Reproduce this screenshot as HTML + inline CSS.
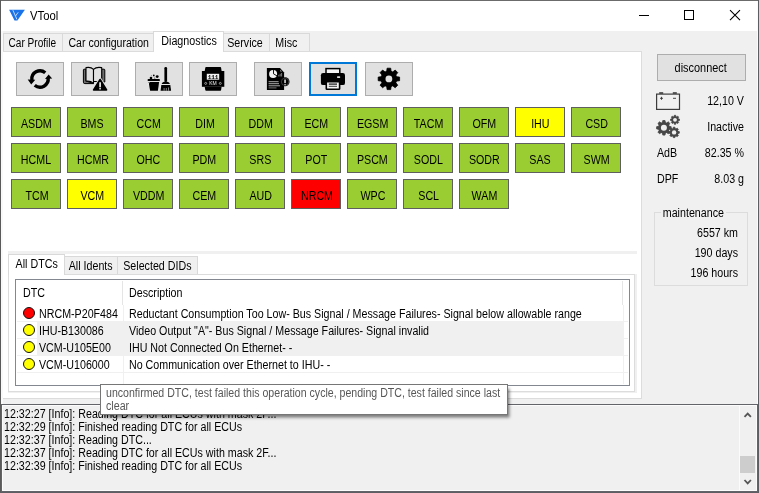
<!DOCTYPE html><html><head><meta charset="utf-8"><title>VTool</title><style>
*{box-sizing:border-box;margin:0;padding:0}
html,body{width:759px;height:493px;overflow:hidden;background:#f0f0f0}
body{position:relative;font-family:"Liberation Sans",sans-serif;font-size:12px;color:#000;line-height:13px}
.x{display:inline-block;transform:scaleX(.89);transform-origin:50% 50%;white-space:nowrap}
.a{position:absolute}
.t{position:absolute;white-space:nowrap;height:13px;line-height:13px;transform:scaleX(.89);transform-origin:0 50%}
.r{text-align:right;transform-origin:100% 50%}
.tb{position:absolute;top:62px;width:48px;height:34px;background:#e1e1e1;border:1px solid #adadad}
.ecu{position:absolute;width:50px;height:30px;background:#9acd32;border:1px solid #5f5f5f;text-align:center;line-height:30px;padding-top:1px;padding-left:1px}
.tab{position:absolute;background:#f0f0f0;border:1px solid #d9d9d9;border-bottom:none;text-align:center}
.tab.sel{background:#fff}
</style></head><body>
<div class="a" style="left:0;top:0;width:759px;height:31px;background:#fff"></div>
<div class="t" style="left:30px;top:9px;font-size:12px;line-height:14px;height:14px;transform:scaleX(.94)">VTool</div>
<div class="a" style="left:0px;top:51px;width:642px;height:348px;background:#fff;border:1px solid #dcdcdc"></div>
<div class="tab" style="left:3px;top:33px;width:61px;height:18px;line-height:13px;padding-top:3px"><span class="x" style="transform:scaleX(0.84);position:relative;left:-1px">Car Profile</span></div>
<div class="tab" style="left:62px;top:33px;width:93px;height:18px;line-height:13px;padding-top:3px"><span class="x" style="transform:scaleX(0.88);position:relative;left:-0.5px">Car configuration</span></div>
<div class="tab sel" style="left:153px;top:31px;width:71px;height:21px;line-height:13px;padding-top:3px"><span class="x" style="transform:scaleX(0.895);position:relative;left:1px">Diagnostics</span></div>
<div class="tab" style="left:223px;top:33px;width:48px;height:18px;line-height:13px;padding-top:3px"><span class="x" style="transform:scaleX(0.89);position:relative;left:-1.5px">Service</span></div>
<div class="tab" style="left:269px;top:33px;width:41px;height:18px;line-height:13px;padding-top:3px"><span class="x" style="transform:scaleX(0.89);position:relative;left:-3.5px">Misc</span></div>
<div class="tb" style="left:16px"></div>
<div class="tb" style="left:71px"></div>
<div class="tb" style="left:135px"></div>
<div class="tb" style="left:189px"></div>
<div class="tb" style="left:254px"></div>
<div class="tb" style="left:309px;border:2px solid #0078d7"></div>
<div class="tb" style="left:365px"></div>
<div class="ecu" style="left:11px;top:107px;"><span class="x">ASDM</span></div>
<div class="ecu" style="left:67px;top:107px;"><span class="x">BMS</span></div>
<div class="ecu" style="left:123px;top:107px;"><span class="x">CCM</span></div>
<div class="ecu" style="left:179px;top:107px;"><span class="x">DIM</span></div>
<div class="ecu" style="left:235px;top:107px;"><span class="x">DDM</span></div>
<div class="ecu" style="left:291px;top:107px;"><span class="x">ECM</span></div>
<div class="ecu" style="left:347px;top:107px;"><span class="x">EGSM</span></div>
<div class="ecu" style="left:403px;top:107px;"><span class="x">TACM</span></div>
<div class="ecu" style="left:459px;top:107px;"><span class="x">OFM</span></div>
<div class="ecu" style="left:515px;top:107px;background:#ffff00;"><span class="x">IHU</span></div>
<div class="ecu" style="left:571px;top:107px;"><span class="x">CSD</span></div>
<div class="ecu" style="left:11px;top:143px;"><span class="x">HCML</span></div>
<div class="ecu" style="left:67px;top:143px;"><span class="x">HCMR</span></div>
<div class="ecu" style="left:123px;top:143px;"><span class="x">OHC</span></div>
<div class="ecu" style="left:179px;top:143px;"><span class="x">PDM</span></div>
<div class="ecu" style="left:235px;top:143px;"><span class="x">SRS</span></div>
<div class="ecu" style="left:291px;top:143px;"><span class="x">POT</span></div>
<div class="ecu" style="left:347px;top:143px;"><span class="x">PSCM</span></div>
<div class="ecu" style="left:403px;top:143px;"><span class="x">SODL</span></div>
<div class="ecu" style="left:459px;top:143px;"><span class="x">SODR</span></div>
<div class="ecu" style="left:515px;top:143px;"><span class="x">SAS</span></div>
<div class="ecu" style="left:571px;top:143px;"><span class="x">SWM</span></div>
<div class="ecu" style="left:11px;top:179px;"><span class="x">TCM</span></div>
<div class="ecu" style="left:67px;top:179px;background:#ffff00;"><span class="x">VCM</span></div>
<div class="ecu" style="left:123px;top:179px;"><span class="x">VDDM</span></div>
<div class="ecu" style="left:179px;top:179px;"><span class="x">CEM</span></div>
<div class="ecu" style="left:235px;top:179px;"><span class="x">AUD</span></div>
<div class="ecu" style="left:291px;top:179px;background:#ff0000;"><span class="x">NRCM</span></div>
<div class="ecu" style="left:347px;top:179px;"><span class="x">WPC</span></div>
<div class="ecu" style="left:403px;top:179px;"><span class="x">SCL</span></div>
<div class="ecu" style="left:459px;top:179px;"><span class="x">WAM</span></div>
<div class="a" style="left:8px;top:251px;width:629px;height:3px;background:#f0f0f0"></div>
<div class="a" style="left:8px;top:274px;width:629px;height:119px;background:#f0f0f0"></div>
<div class="a" style="left:8px;top:274px;width:627px;height:118px;background:#fff;border:1px solid #dcdcdc"></div>
<div class="tab sel" style="left:8px;top:254px;width:57px;height:21px;line-height:13px;padding-top:3px"><span class="x">All DTCs</span></div>
<div class="tab" style="left:64px;top:256px;width:54px;height:18px;line-height:13px;padding-top:3px"><span class="x">All Idents</span></div>
<div class="tab" style="left:117px;top:256px;width:81px;height:18px;line-height:13px;padding-top:3px"><span class="x">Selected DIDs</span></div>
<div class="a" style="left:15px;top:279px;width:615px;height:107px;background:#fff;border:1px solid #828790"></div>
<div class="a" style="left:122px;top:281px;width:1px;height:24px;background:#e5e5e5"></div>
<div class="a" style="left:622px;top:281px;width:1px;height:24px;background:#e5e5e5"></div>
<div class="t" style="left:23px;top:287px">DTC</div>
<div class="t" style="left:129px;top:287px">Description</div>
<div class="a" style="left:17px;top:321px;width:611px;height:1px;background:#f0f0f0"></div>
<div class="a" style="left:17px;top:338px;width:611px;height:1px;background:#f0f0f0"></div>
<div class="a" style="left:17px;top:355px;width:611px;height:1px;background:#f0f0f0"></div>
<div class="a" style="left:17px;top:372px;width:611px;height:1px;background:#f0f0f0"></div>
<div class="a" style="left:123px;top:305px;width:1px;height:79px;background:#f0f0f0"></div>
<div class="a" style="left:623px;top:305px;width:1px;height:79px;background:#f0f0f0"></div>
<div class="a" style="left:37px;top:322px;width:586px;height:33px;background:#f0f0f0"></div>
<div class="a" style="left:23px;top:307px;width:12px;height:12px;border-radius:50%;background:#ff0000;border:1px solid #111"></div>
<div class="t" style="left:39px;top:308px">NRCM-P20F484</div>
<div class="t" style="left:129px;top:308px">Reductant Consumption Too Low- Bus Signal / Message Failures- Signal below allowable range</div>
<div class="a" style="left:23px;top:324px;width:12px;height:12px;border-radius:50%;background:#ffff00;border:1px solid #111"></div>
<div class="t" style="left:39px;top:325px">IHU-B130086</div>
<div class="t" style="left:129px;top:325px">Video Output &quot;A&quot;- Bus Signal / Message Failures- Signal invalid</div>
<div class="a" style="left:23px;top:341px;width:12px;height:12px;border-radius:50%;background:#ffff00;border:1px solid #111"></div>
<div class="t" style="left:39px;top:342px">VCM-U105E00</div>
<div class="t" style="left:129px;top:342px">IHU Not Connected On Ethernet- -</div>
<div class="a" style="left:23px;top:358px;width:12px;height:12px;border-radius:50%;background:#ffff00;border:1px solid #111"></div>
<div class="t" style="left:39px;top:359px">VCM-U106000</div>
<div class="t" style="left:129px;top:359px">No Communication over Ethernet to IHU- -</div>
<div class="a" style="left:657px;top:54px;width:89px;height:27px;background:#e1e1e1;border:1px solid #adadad;text-align:center;line-height:25px;padding-right:2px;padding-top:1px"><span class="x" style="transform:scaleX(.91)">disconnect</span></div>
<div class="t r" style="left:680px;width:64px;top:95px">12,10 V</div>
<div class="t r" style="left:680px;width:64px;top:121px">Inactive</div>
<div class="t" style="left:657px;top:147px">AdB</div>
<div class="t r" style="left:680px;width:64px;top:147px">82.35 %</div>
<div class="t" style="left:657px;top:173px">DPF</div>
<div class="t r" style="left:680px;width:64px;top:173px">8.03 g</div>
<div class="a" style="left:654px;top:212px;width:94px;height:74px;border:1px solid #dcdcdc"></div>
<div class="t" style="left:661px;top:207px;background:#f0f0f0;padding:0 2px">maintenance</div>
<div class="t r" style="left:670px;width:68px;top:227px">6557 km</div>
<div class="t r" style="left:670px;width:68px;top:247px">190 days</div>
<div class="t r" style="left:670px;width:68px;top:267px">196 hours</div>
<div class="a" style="left:1px;top:31px;width:2px;height:373px;background:#f9f9f9"></div>
<div class="a" style="left:757px;top:1px;width:1px;height:403px;background:#fbfbfb"></div>
<div class="a" style="left:1px;top:404px;width:757px;height:88px;background:#f0f0f0;border:1px solid #62646a;box-shadow:inset 0 0 0 1px #fcfcfc"></div>
<div class="t" style="left:4px;top:408px">12:32:27 [Info]: Reading DTC for all ECUs with mask 2F...</div>
<div class="t" style="left:4px;top:421px">12:32:29 [Info]: Finished reading DTC for all ECUs</div>
<div class="t" style="left:4px;top:434px">12:32:37 [Info]: Reading DTC...</div>
<div class="t" style="left:4px;top:447px">12:32:37 [Info]: Reading DTC for all ECUs with mask 2F...</div>
<div class="t" style="left:4px;top:460px">12:32:39 [Info]: Finished reading DTC for all ECUs</div>
<div class="a" style="left:739px;top:405px;width:1px;height:85px;background:#fbfbfb"></div>
<div class="a" style="left:740px;top:456px;width:15px;height:17px;background:#cdcdcd"></div>
<div class="a" style="left:100px;top:384px;width:408px;height:31px;background:#fff;border:1px solid #767676;box-shadow:2px 3px 3px -0.5px rgba(0,0,0,0.5);color:#575757;padding:2px 0 0 5px;line-height:12.5px;white-space:nowrap"><span class="x" style="transform-origin:0 50%;transform:scaleX(.882)">unconfirmed DTC, test failed this operation cycle, pending DTC, test failed since last</span><br><span class="x" style="transform-origin:0 50%">clear</span></div>
<svg class="a" style="left:0;top:0" width="759" height="493" viewBox="0 0 759 493">
<path d="M9.1,9.8 L24.9,9.8 L17.4,20.6 L14.5,20.6 Z" fill="#1a73e8"/>
<path d="M12.9,10.2 L16.9,19.4 M18.2,12.3 L15.6,15.9" stroke="#fff" stroke-width="0.7" fill="none"/>
<path d="M639,15.5 H649" stroke="#000" stroke-width="1"/>
<rect x="684.5" y="10.5" width="9" height="9" fill="none" stroke="#000" stroke-width="1"/>
<path d="M730,10.2 L740,20.2 M740,10.2 L730,20.2" stroke="#000" stroke-width="1.1"/>
<path d="M31.88,80.14 A8.20,8.20 0 0 1 45.27,72.72" stroke="#000" stroke-width="3.4" fill="none"/>
<path d="M48.12,77.86 A8.20,8.20 0 0 1 34.73,85.28" stroke="#000" stroke-width="3.4" fill="none"/>
<path d="M27.7,79.5 L35.3,79.8 L31.2,84.4Z M45,79 L52.2,78.5 L48.6,74.4Z" fill="#000"/>
<path d="M84,69.2 H86 V81 L93.5,83.6 H84.8 Q83.4,83.6 83.4,82.2 V69.9 Q83.4,69.2 84,69.2Z" fill="#6e6e6e" stroke="#000" stroke-width="1"/>
<path d="M101.6,69.2 H104 Q104.8,69.2 104.8,70 V82 H101.6Z" fill="#6e6e6e" stroke="#000" stroke-width="1"/>
<path d="M86,67.6 Q90.8,66.6 93.5,69.3 V83.3 Q90.5,80.6 86,81.2Z" fill="#e1e1e1" stroke="#000" stroke-width="1.1" stroke-linejoin="round"/>
<path d="M93.5,69.3 Q96.3,66.6 101.7,67.6 V81.5 H93.5Z" fill="#e1e1e1" stroke="#000" stroke-width="1.1" stroke-linejoin="round"/>
<path d="M100.1,79.5 L106.6,89.9 H93.6Z" fill="#e1e1e1" stroke="#e1e1e1" stroke-width="3.4" stroke-linejoin="round"/>
<path d="M100.1,79.5 L106.6,89.9 H93.6Z" fill="#000" stroke="#000" stroke-width="1.6" stroke-linejoin="round"/>
<path d="M100.1,82.2 V87.2" stroke="#e0e0e0" stroke-width="1.8"/><circle cx="100.1" cy="88.7" r="0.9" fill="#e0e0e0"/>
<rect x="147.6" y="78.9" width="12.3" height="2.2" rx="0.9" fill="#000"/>
<path d="M148.6,82 H159.1 L157.9,90.7 H150.1Z" fill="#000"/>
<path d="M149.6,82.6 Q147.2,83.5 148.2,85.6" stroke="#f4f4f4" stroke-width="0.8" fill="none"/>
<circle cx="157.2" cy="76.6" r="1.45" fill="#000"/><circle cx="151" cy="78" r="1.3" fill="#000"/><circle cx="153.8" cy="75.4" r="0.85" fill="#000"/><circle cx="154.8" cy="77.9" r="0.5" fill="#000"/><circle cx="151.2" cy="75.6" r="0.35" fill="#000"/>
<rect x="164.4" y="67" width="2.7" height="15" rx="1.2" fill="#000"/>
<path d="M161.7,84.1 Q162.2,81.6 165.7,81.4 Q169.4,81.6 169.9,84.1Z" fill="#000"/>
<path d="M161.3,85 H170.3 L171.1,90.7 H160.6Z" fill="#000"/>
<path d="M164.1,88 V90.7 M166.3,88 V90.7 M168.5,87.5 V90.7" stroke="#d8d8d8" stroke-width="0.6"/>
<path d="M206,67 H220.4 Q221,67 221.1,67.8 L221.6,71 H204.7 L205.3,67.8 Q205.4,67 206,67Z" fill="#000"/>
<path d="M206,90.8 H220.4 Q221,90.8 221.1,90 L221.6,86.8 H204.7 L205.3,90 Q205.4,90.8 206,90.8Z" fill="#000"/>
<rect x="201.9" y="71" width="22.4" height="15.8" fill="#000"/>
<rect x="206.8" y="73.8" width="12.4" height="5.9" fill="#f2f2f2"/>
<g style="filter:grayscale(1)"><text x="213" y="79" font-family="Liberation Mono,monospace" font-weight="bold" font-size="6.2" text-anchor="middle" fill="#000" letter-spacing="-0.2">111</text>
<text x="213" y="85.2" font-family="Liberation Sans,sans-serif" font-size="5" text-anchor="middle" fill="#f2f2f2">KM</text></g>
<circle cx="205.7" cy="83.4" r="1" fill="none" stroke="#e8e8e8" stroke-width="0.6"/><circle cx="220.3" cy="83.4" r="1" fill="none" stroke="#e8e8e8" stroke-width="0.6"/>
<path d="M266.9,67.9 H280 L284.1,72.4 V89.9 H266.9Z" fill="#000"/>
<circle cx="273.1" cy="74.1" r="4" fill="#f4f4f4"/>
<path d="M273.5,73.8 V69.4 M273.5,73.8 L277.2,76" stroke="#000" stroke-width="0.9" fill="none"/>
<path d="M278.8,76.5 V74.8 M280.2,76.5 V73.8 M281.6,76.5 V73" stroke="#888" stroke-width="0.9"/>
<path d="M280.4,69.8 L281.8,71.4 H280.4Z" fill="#ccc"/>
<path d="M268.6,81.7 H278.6 M268.6,83.7 H279 M268.6,85.8 H280" stroke="#d8d8d8" stroke-width="0.8"/>
<path d="M268.6,87.9 H276.5" stroke="#777" stroke-width="1"/>
<circle cx="285.05" cy="81.8" r="4.5" fill="#000"/><circle cx="285.05" cy="81.8" r="3.7" fill="none" stroke="#a0a0a0" stroke-width="0.35"/>
<path d="M285.05,79.6 V82.9" stroke="#f0f0f0" stroke-width="1.4"/><circle cx="285.05" cy="84.5" r="0.65" fill="#e8e8e8"/>
<rect x="326" y="68.6" width="13.8" height="6" fill="#f4f4f4" stroke="#000" stroke-width="1.5"/>
<rect x="320.9" y="73" width="24.1" height="12.1" rx="2.2" fill="#000"/>
<rect x="326.3" y="81.8" width="13.3" height="7.5" rx="0.5" fill="#f4f4f4" stroke="#000" stroke-width="1.6"/>
<path d="M328.8,84.1 H337 " stroke="#222" stroke-width="1.3"/><path d="M328.8,86.3 H337" stroke="#222" stroke-width="0.9"/>
<rect x="337" y="76.3" width="3.2" height="1.6" rx="0.6" fill="#ddd"/>
<path d="M396.48,76.70 L399.60,77.10 L399.60,80.70 L396.48,81.10 L395.82,82.71 L397.74,85.19 L395.19,87.74 L392.71,85.82 L391.10,86.48 L390.70,89.60 L387.10,89.60 L386.70,86.48 L385.09,85.82 L382.61,87.74 L380.06,85.19 L381.98,82.71 L381.32,81.10 L378.20,80.70 L378.20,77.10 L381.32,76.70 L381.98,75.09 L380.06,72.61 L382.61,70.06 L385.09,71.98 L386.70,71.32 L387.10,68.20 L390.70,68.20 L391.10,71.32 L392.71,71.98 L395.19,70.06 L397.74,72.61 L395.82,75.09Z" fill="#000" stroke="#000" stroke-width="0.8" stroke-linejoin="round"/><circle cx="388.90" cy="78.90" r="7.90" fill="#000"/>
<circle cx="388.90" cy="78.90" r="3.40" fill="#e1e1e1"/>
<rect x="656.6" y="94.1" width="22.9" height="15.3" fill="none" stroke="#3c3c3c" stroke-width="1.2"/>
<rect x="659.2" y="92.2" width="4" height="1.6" fill="#3c3c3c"/><rect x="672.8" y="92.2" width="4" height="1.6" fill="#3c3c3c"/>
<path d="M660,98.3 H663 M661.5,96.8 V99.8 M673,98.3 H676" stroke="#333" stroke-width="0.9"/>
<path d="M669.18,126.30 L671.20,126.70 L671.20,128.90 L669.18,129.30 L668.69,130.47 L669.84,132.18 L668.28,133.74 L666.57,132.59 L665.40,133.08 L665.00,135.10 L662.80,135.10 L662.40,133.08 L661.23,132.59 L659.52,133.74 L657.96,132.18 L659.11,130.47 L658.62,129.30 L656.60,128.90 L656.60,126.70 L658.62,126.30 L659.11,125.13 L657.96,123.42 L659.52,121.86 L661.23,123.01 L662.40,122.52 L662.80,120.50 L665.00,120.50 L665.40,122.52 L666.57,123.01 L668.28,121.86 L669.84,123.42 L668.69,125.13Z" fill="#474747" stroke="#474747" stroke-width="0.8" stroke-linejoin="round"/><circle cx="663.90" cy="127.80" r="5.50" fill="#474747"/>
<circle cx="663.90" cy="127.80" r="3.00" fill="#f0f0f0"/>
<path d="M678.17,118.85 L679.50,119.15 L679.50,120.45 L678.17,120.75 L677.91,121.37 L678.64,122.52 L677.72,123.44 L676.57,122.71 L675.95,122.97 L675.65,124.30 L674.35,124.30 L674.05,122.97 L673.43,122.71 L672.28,123.44 L671.36,122.52 L672.09,121.37 L671.83,120.75 L670.50,120.45 L670.50,119.15 L671.83,118.85 L672.09,118.23 L671.36,117.08 L672.28,116.16 L673.43,116.89 L674.05,116.63 L674.35,115.30 L675.65,115.30 L675.95,116.63 L676.57,116.89 L677.72,116.16 L678.64,117.08 L677.91,118.23Z" fill="#474747" stroke="#474747" stroke-width="0.8" stroke-linejoin="round"/><circle cx="675.00" cy="119.80" r="3.30" fill="#474747"/>
<circle cx="675.00" cy="119.80" r="1.90" fill="#f0f0f0"/>
<path d="M677.84,131.30 L679.30,131.60 L679.30,133.20 L677.84,133.50 L677.53,134.27 L678.34,135.51 L677.21,136.64 L675.97,135.83 L675.20,136.14 L674.90,137.60 L673.30,137.60 L673.00,136.14 L672.23,135.83 L670.99,136.64 L669.86,135.51 L670.67,134.27 L670.36,133.50 L668.90,133.20 L668.90,131.60 L670.36,131.30 L670.67,130.53 L669.86,129.29 L670.99,128.16 L672.23,128.97 L673.00,128.66 L673.30,127.20 L674.90,127.20 L675.20,128.66 L675.97,128.97 L677.21,128.16 L678.34,129.29 L677.53,130.53Z" fill="#474747" stroke="#474747" stroke-width="0.8" stroke-linejoin="round"/><circle cx="674.10" cy="132.40" r="3.90" fill="#474747"/>
<circle cx="674.10" cy="132.40" r="2.20" fill="#f0f0f0"/>
<path d="M744.5,416.9 L747.7,413.6 L750.9,416.9" stroke="#555" stroke-width="1.8" fill="none"/>
<path d="M744.5,480 L747.7,483.4 L750.9,480" stroke="#555" stroke-width="1.8" fill="none"/>
</svg>
<div class="a" style="left:0;top:0;width:759px;height:1px;background:#6b6b6b"></div>
<div class="a" style="left:0;top:0;width:1px;height:493px;background:#5a5a5a"></div>
<div class="a" style="left:758px;top:0;width:1px;height:493px;background:#5c5e63"></div>
<div class="a" style="left:0;top:492px;width:759px;height:1px;background:#5c5e63"></div>
</body></html>
